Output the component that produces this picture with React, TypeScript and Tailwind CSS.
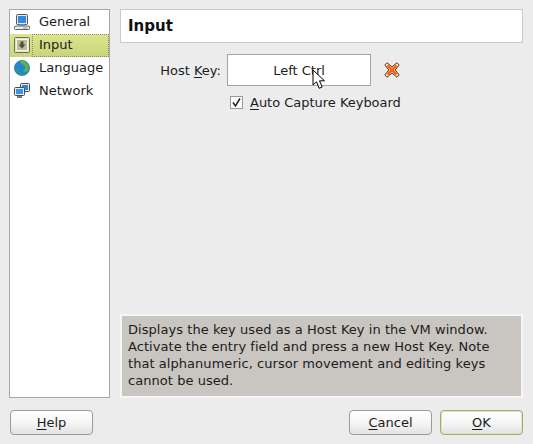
import React from 'react';

const font = { fontFamily: '"DejaVu Sans", sans-serif' };

function GeneralIcon() {
  return (
    <svg width="16" height="16" viewBox="0 0 16 16" className="shrink-0">
      <rect x="2.500" y="0.500" width="11" height="10" rx="1" fill="#e8e8e8" stroke="#4a5a6a" />
      <rect x="4" y="2" width="8" height="7" fill="#2f8be0" />
      <rect x="5" y="10.500" width="6" height="1.500" fill="#aab0b6" />
      <rect x="0.500" y="12" width="15" height="3.500" rx="1" fill="#ececec" stroke="#56626e" />
      <rect x="9" y="13.500" width="4" height="1" fill="#8a949e" />
    </svg>
  );
}

function InputIcon() {
  return (
    <svg width="16" height="16" viewBox="0 0 16 16" className="shrink-0">
      <rect x="0.500" y="0.500" width="15" height="15" rx="1" fill="#e4e4cc" stroke="#707058" />
      <rect x="2.500" y="2.500" width="11" height="11" fill="#bcbc98" stroke="#f4f4e8" />
      <path d="M6.500 4.500h3v3h2L8 11.500 4.500 7.500h2z" fill="#4e4e38" />
    </svg>
  );
}

function LanguageIcon() {
  return (
    <svg width="16" height="16" viewBox="0 0 16 16" className="shrink-0">
      <circle cx="8" cy="8" r="7.600" fill="#2a82d8" stroke="#1c5c8c" strokeWidth="0.600" />
      <path d="M6 1c3-1 6 0 8 4 1 2 1 4 0 6-2 1-3 1-5 0 2-2 3-3 2-5-2-1-4-2-5-5z" fill="#58b83e" />
      <path d="M1 8c1-1 3-1 4 1 0 2 1 3 3 4 2 1 4 0 5-1-2 3-5 4-8 2-2-1-4-3-4-6z" fill="#1f9a9a" />
    </svg>
  );
}

function NetworkIcon() {
  return (
    <svg width="16" height="15" viewBox="0 0 16 15" className="shrink-0">
      <rect x="6.500" y="0.500" width="9" height="8" rx="1" fill="#e8eaec" stroke="#3f4c58" />
      <rect x="8" y="2" width="6" height="5" fill="#2f84dc" />
      <rect x="0.500" y="4.500" width="10" height="8" rx="1" fill="#e8eaec" stroke="#3f4c58" />
      <rect x="2" y="6" width="7" height="5" fill="#3a94ea" />
      <rect x="3" y="13" width="5" height="2" fill="#6e7a86" />
    </svg>
  );
}

function CloseIcon() {
  return (
    <svg width="16" height="16" viewBox="0 0 16 16">
      <path
        d="M3 .8 8 4.800 13 .8 15.200 3 11.200 8l4 5-2.200 2.200-5-4-5 4L.8 13l4-5-4-5z"
        fill="#fbe6c8"
        stroke="#6e3418"
        strokeWidth="1"
        strokeLinejoin="round"
      />
      <path d="M3.500 3.500 12.500 12.500M12.500 3.500 3.500 12.500" stroke="#f0641e" strokeWidth="2.600" />
    </svg>
  );
}

function Cursor() {
  return (
    <svg width="14" height="21" viewBox="0 0 14 21" className="absolute left-[84px] top-[14px]">
      <path d="M1 1v15l3.500-3.200 2.700 6.500 3-1.300-2.700-6.200H12.500z" fill="#fff" stroke="#000" strokeWidth="1" strokeLinejoin="round" />
    </svg>
  );
}

function NavRow({ icon, label, active }: { icon: React.ReactNode; label: string; active?: boolean }) {
  return (
    <div className={`flex h-[23px] items-center ${active ? 'bg-gradient-to-b from-[#dce68e] to-[#c8d47a]' : ''}`}>
      <div className="flex w-[21px] shrink-0 justify-center pb-[2px] pl-[2px]">{icon}</div>
      <div className={`ml-[1px] flex h-[23px] flex-1 items-center border pb-[2px] pl-[6px] ${active ? 'border-dotted border-[#8a8a70]' : 'border-transparent'}`}>
        {label}
      </div>
    </div>
  );
}

function Btn({ children, primary }: { children: React.ReactNode; primary?: boolean }) {
  return (
    <button
      className={`flex h-[25px] w-[83px] items-center justify-center rounded-[4px] border bg-gradient-to-b from-white via-[#f6f6f6] to-[#e2e2e2] text-[13px] text-[#1c1c1c] ${
        primary ? 'border-[#a3ab72] ring-1 ring-inset ring-[#dfe4bd]' : 'border-[#9c9c9c]'
      }`}
    >
      {children}
    </button>
  );
}

export default function App() {
  return (
    <div className="flex h-[444px] w-[533px] flex-col bg-[#ececec] pb-[9px] pl-[9px] pr-[10px] pt-[9px] text-[13px] leading-[17px] text-[#1c1c1c]" style={font}>
      <div className="flex flex-1 gap-[10px]">
        {/* left list */}
        <div className="flex h-[389px] w-[101px] shrink-0 flex-col border border-[#a8a8a8] bg-white pt-px">
          <NavRow icon={<GeneralIcon />} label="General" />
          <NavRow icon={<InputIcon />} label="Input" active />
          <NavRow icon={<LanguageIcon />} label="Language" />
          <NavRow icon={<NetworkIcon />} label="Network" />
        </div>

        {/* right panel */}
        <div className="flex h-[389px] flex-1 flex-col">
          <div className="flex h-[34px] items-center border border-[#c9c9c9] bg-white pl-[7px] text-[15px] font-bold text-[#111]">
            Input
          </div>

          <div className="mt-[11px] flex items-center">
            <div className="w-[101px] text-right">
              Host <span className="underline underline-offset-2">K</span>ey:
            </div>
            <div className="relative ml-[6px] flex h-[32px] w-[144px] items-center justify-center border border-[#a4a4a4] bg-white">
              Left Ctrl
              <Cursor />
            </div>
            <div className="ml-[13px] flex items-center">
              <CloseIcon />
            </div>
          </div>

          <div className="ml-[110px] mt-[8px] flex items-center gap-[7px]">
            <span className="flex h-[13px] w-[13px] items-center justify-center border border-[#9a9a9a] bg-[#fdfdfd]">
              <svg width="11" height="11" viewBox="0 0 11 11">
                <path d="M2 5.500 4.500 9 9 1.500" fill="none" stroke="#222" strokeWidth="1.500" />
              </svg>
            </span>
            <span className="tracking-[-0.02px]">
              <span className="underline underline-offset-2">A</span>uto Capture Keyboard
            </span>
          </div>

          <div className="mt-auto h-[84px] border-2 border-[#f6f6f6] bg-[#c9c5c1] py-[5px] pl-[6px] pr-0 tracking-[0.05px] text-[#1c1c1c]">
            Displays the key used as a Host Key in the VM window.
            <br />
            Activate the entry field and press a new Host Key. Note
            <br />
            that alphanumeric, cursor movement and editing keys
            <br />
            cannot be used.
          </div>
        </div>
      </div>

      <div className="flex items-center justify-between pl-px">
        <Btn>
          <span>
            <span className="underline underline-offset-2">H</span>elp
          </span>
        </Btn>
        <div className="flex gap-[8px]">
          <Btn>
            <span>
              <span className="underline underline-offset-2">C</span>ancel
            </span>
          </Btn>
          <Btn primary>
            <span>
              <span className="underline underline-offset-2">O</span>K
            </span>
          </Btn>
        </div>
      </div>
    </div>
  );
}
